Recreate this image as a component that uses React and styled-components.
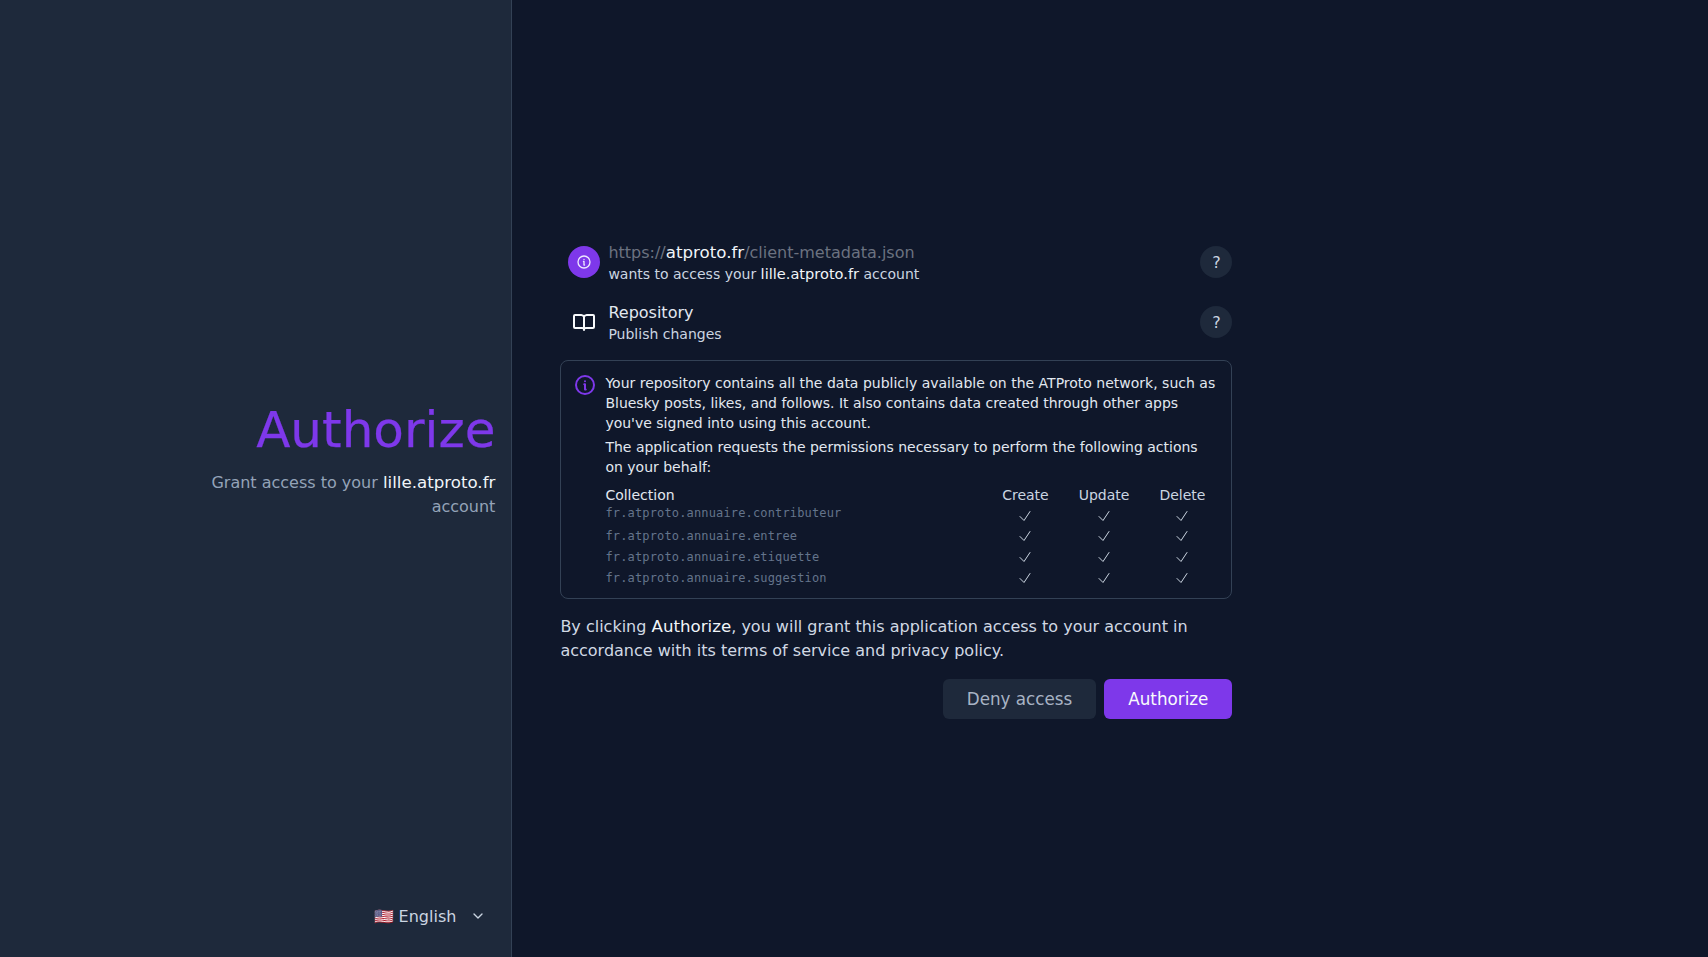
import styled, { createGlobalStyle } from 'styled-components';

const GlobalStyle = createGlobalStyle`
  html, body, #root {
    height: 100%;
    margin: 0;
  }
  body {
    background-color: #0f172a;
    font-family: "DejaVu Sans", sans-serif;
  }
  * {
    box-sizing: border-box;
  }
`;

const Page = styled.div`
  display: flex;
  height: 100vh;
  background-color: #0f172a;
  overflow: hidden;
`;
const Side = styled.aside`
  width: 30%;
  flex-shrink: 0;
  display: flex;
  flex-direction: column;
  padding: 16px 16px 21px;
  background-color: #1e293b;
  border-right: 1px solid #334155;
`;
const SideMiddle = styled.div`
  flex: 1;
  display: flex;
  flex-direction: column;
  justify-content: center;
  align-items: flex-end;
  padding-top: 13px;
  text-align: right;
`;
const Title = styled.h1`
  margin: 0 0 17px;
  font-size: 50px;
  line-height: 48px;
  font-weight: 500;
  -webkit-text-stroke: 0.25px currentColor;
  color: #7e38ea;
`;
const Strong = styled.strong`
  font-size: 1.042em;
  font-weight: 500;
  color: #f1f5f9;
`;
const Subtitle = styled.p`
  max-width: 320px;
  margin: 0;
  font-size: 16px;
  line-height: 24px;
  color: #94a3b8;
`;
const LangRow = styled.div`
  display: flex;
  justify-content: flex-end;
  align-items: center;
  height: 40px;
  padding-right: 9px;
  font-size: 16px;
  color: #cbd5e1;
`;
const LangLabel = styled.span`
  margin-right: 14px;
`;
const Main = styled.main`
  flex: 1;
  display: flex;
  flex-direction: column;
  justify-content: center;
  padding: 0 48px 6px;
`;
const Content = styled.div`
  width: 672px;
  display: flex;
  flex-direction: column;
`;
const Row = styled.div`
  display: flex;
  align-items: center;
  height: 60px;
  padding: 8px 0 8px 8px;
`;
const RowIcon = styled.div`
  width: 32px;
  height: 32px;
  flex-shrink: 0;
  border-radius: 50%;
  display: flex;
  align-items: center;
  justify-content: center;
  color: ${(p) => (p.$filled ? '#ede9fe' : '#f8fafc')};
  background-color: ${(p) => (p.$filled ? '#7e38ea' : 'transparent')};
`;
const RowText = styled.div`
  flex: 1;
  margin-left: 8px;
  min-width: 0;
`;
const RowTitle = styled.div`
  font-size: 16px;
  line-height: 24px;
  color: ${(p) => (p.$muted ? '#6b7280' : '#e2e8f0')};
`;
const RowSub = styled.div`
  margin-top: -1px;
  font-size: 14px;
  line-height: 20px;
  color: #cbd5e1;
`;
const HelpButton = styled.button`
  width: 32px;
  height: 32px;
  flex-shrink: 0;
  padding: 0;
  border: none;
  border-radius: 50%;
  background-color: #1e293b;
  color: #cbd5e1;
  font-family: inherit;
  font-size: 16px;
`;
const InfoBox = styled.div`
  display: flex;
  gap: 8px;
  margin-top: 8px;
  padding: 12px 12px 10px;
  border: 1px solid #334155;
  border-radius: 8px;
`;
const InfoIcon = styled.div`
  flex-shrink: 0;
  width: 24px;
  height: 24px;
  color: #7e38ea;
`;
const InfoBody = styled.div`
  flex: 1;
  min-width: 0;
`;
const Para = styled.p`
  margin: 0 0 4px;
  font-size: 14px;
  line-height: 20px;
  color: #e2e8f0;
`;
const Table = styled.table`
  width: 100%;
  margin-top: 8px;
  border-collapse: collapse;
  tbody tr:nth-child(2) td {
    height: 20px;
  }
`;
const HeadCell = styled.th`
  padding: 0 15px;
  font-size: 14px;
  line-height: 20px;
  font-weight: 400;
  color: #cbd5e1;
  text-align: center;
  &:first-child {
    padding-left: 0;
    text-align: left;
    width: 100%;
    color: #e2e8f0;
  }
  &:last-child {
    padding-right: 14px;
  }
`;
const NameCell = styled.td`
  height: 21px;
  padding: 0;
  vertical-align: ${(p) => (p.$top ? 'top' : 'middle')};
  font-family: "DejaVu Sans Mono", monospace;
  font-size: 12px;
  line-height: 16px;
  letter-spacing: 0.15px;
  color: #64748b;
`;
const CheckCell = styled.td`
  height: 21px;
  padding: 0 15px;
  text-align: center;
  color: #cbd5e1;
  &:last-child {
    padding-right: 14px;
  }
  svg {
    display: block;
    margin: 0 auto;
  }
`;
const Notice = styled.p`
  margin: 16px 0 0;
  font-size: 16px;
  line-height: 24px;
  color: #d1d9e4;
`;
const Actions = styled.div`
  display: flex;
  justify-content: flex-end;
  gap: 8px;
  margin-top: 16px;
`;
const ActionButton = styled.button`
  height: 40px;
  padding: 0 24px;
  border: none;
  border-radius: 6px;
  font-family: inherit;
  font-size: 16.75px;
  font-weight: 500;
  color: ${(p) => (p.$primary ? '#f8fafc' : '#a8b3c4')};
  background-color: ${(p) => (p.$primary ? '#7e38ea' : '#1e293b')};
`;

const scopes = [
  'fr.atproto.annuaire.contributeur',
  'fr.atproto.annuaire.entree',
  'fr.atproto.annuaire.etiquette',
  'fr.atproto.annuaire.suggestion',
];

const InfoCircle = ({ size }) => (
  <svg width={size} height={size} viewBox="0 0 24 24" fill="none" stroke="currentColor" strokeWidth="2" strokeLinecap="round" strokeLinejoin="round">
    <circle cx="12" cy="12" r="9" />
    <path d="M11.25 11.25h.75v5.25h.75" />
    <path d="M12 8.25h.01" />
  </svg>
);

const BookIcon = () => (
  <svg width="24" height="24" viewBox="0 0 24 24" fill="none" stroke="currentColor" strokeWidth="2" strokeLinecap="round" strokeLinejoin="round">
    <path d="M12 7v13" />
    <path d="M12 7a3 3 0 0 0-3-2H3a1 1 0 0 0-1 1v11a1 1 0 0 0 1 1h7a2 2 0 0 1 2 1 2 2 0 0 1 2-1h7a1 1 0 0 0 1-1V6a1 1 0 0 0-1-1h-6a3 3 0 0 0-3 2z" />
  </svg>
);

const CheckIcon = () => (
  <svg width="16" height="16" viewBox="0 0 24 24" fill="none" stroke="currentColor" strokeWidth="1.5" strokeLinecap="round" strokeLinejoin="round">
    <path d="m4.5 12.75 6 6 9-13.5" />
  </svg>
);

const Chevron = () => (
  <svg width="16" height="16" viewBox="0 0 24 24" fill="none" stroke="currentColor" strokeWidth="2" strokeLinecap="round" strokeLinejoin="round">
    <path d="m6 9 6 6 6-6" />
  </svg>
);

const App = () => {
  return (
    <Page>
      <GlobalStyle />
      <Side>
        <SideMiddle>
          <Title>Authorize</Title>
          <Subtitle>Grant access to your <Strong>lille.atproto.fr</Strong> account</Subtitle>
        </SideMiddle>
        <LangRow>
          <LangLabel>🇺🇸 English</LangLabel>
          <Chevron />
        </LangRow>
      </Side>
      <Main>
        <Content>
          <Row>
            <RowIcon $filled><InfoCircle size={16} /></RowIcon>
            <RowText>
              <RowTitle $muted>https://<Strong>atproto.fr</Strong>/client-metadata.json</RowTitle>
              <RowSub>wants to access your <Strong>lille.atproto.fr</Strong> account</RowSub>
            </RowText>
            <HelpButton>?</HelpButton>
          </Row>
          <Row>
            <RowIcon><BookIcon /></RowIcon>
            <RowText>
              <RowTitle>Repository</RowTitle>
              <RowSub>Publish changes</RowSub>
            </RowText>
            <HelpButton>?</HelpButton>
          </Row>
          <InfoBox>
            <InfoIcon><InfoCircle size={24} /></InfoIcon>
            <InfoBody>
              <Para>Your repository contains all the data publicly available on the ATProto network, such as Bluesky posts, likes, and follows. It also contains data created through other apps you've signed into using this account.</Para>
              <Para>The application requests the permissions necessary to perform the following actions on your behalf:</Para>
              <Table>
                <thead>
                  <tr>
                    <HeadCell>Collection</HeadCell>
                    <HeadCell>Create</HeadCell>
                    <HeadCell>Update</HeadCell>
                    <HeadCell>Delete</HeadCell>
                  </tr>
                </thead>
                <tbody>
                  {scopes.map((scope, i) => (
                    <tr key={scope}>
                      <NameCell $top={i === 0}>{scope}</NameCell>
                      <CheckCell><CheckIcon /></CheckCell>
                      <CheckCell><CheckIcon /></CheckCell>
                      <CheckCell><CheckIcon /></CheckCell>
                    </tr>
                  ))}
                </tbody>
              </Table>
            </InfoBody>
          </InfoBox>
          <Notice>By clicking <Strong>Authorize</Strong>, you will grant this application access to your account in accordance with its terms of service and privacy policy.</Notice>
          <Actions>
            <ActionButton>Deny access</ActionButton>
            <ActionButton $primary>Authorize</ActionButton>
          </Actions>
        </Content>
      </Main>
    </Page>
  );
};

export default App;
